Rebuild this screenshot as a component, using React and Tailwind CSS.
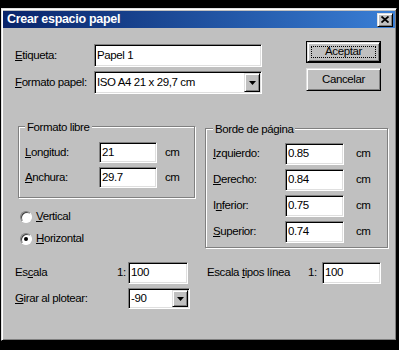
import React from "react";

const FONT = "font-['Liberation_Sans',Arial,sans-serif]";
const sunken =
  "bg-white border border-t-[#808080] border-l-[#808080] border-r-white border-b-white shadow-[inset_1px_1px_0_#000,inset_-1px_-1px_0_#dfdfdf]";
const raised =
  "bg-[#c0c0c0] border border-t-[#dfdfdf] border-l-[#dfdfdf] border-r-black border-b-black shadow-[inset_1px_1px_0_#fff,inset_-1px_-1px_0_#808080]";
const groupBox =
  "relative border border-[#808080] shadow-[inset_1px_1px_0_#fff,1px_1px_0_#fff]";

function Field({ value, w, h = 22 }) {
  return (
    <div
      className={`${sunken} flex items-center pl-[2px] shrink-0`}
      style={{ width: w, height: h }}
    >
      {value}
    </div>
  );
}

function Arrow() {
  return (
    <svg width="7" height="4" viewBox="0 0 7 4">
      <path d="M0 0H7L3.5 4Z" fill="#000" />
    </svg>
  );
}

function Select({ value, w, h = 23 }) {
  return (
    <div
      className={`${sunken} flex items-stretch p-[1px] shrink-0`}
      style={{ width: w, height: h }}
    >
      <div className="flex-1 flex items-center pl-[1px]">{value}</div>
      <div className={`${raised} w-[16px] flex items-center justify-center`}>
        <Arrow />
      </div>
    </div>
  );
}

function Radio({ checked, children }) {
  return (
    <div className="h-[22px] flex items-center ml-[17px]">
      <div className="w-[12px] h-[12px] rounded-full bg-white border border-t-[#808080] border-l-[#808080] border-r-white border-b-[#fff] shadow-[inset_1px_1px_0_#404040] flex items-center justify-center">
        {checked && <div className="w-[4px] h-[4px] rounded-full bg-black" />}
      </div>
      <span className="ml-[4px]">{children}</span>
    </div>
  );
}

export default function App() {
  return (
    <div className={`w-[399px] h-[350px] bg-black pt-[8px] pl-[1px] ${FONT} text-[11.5px] tracking-[-0.4px] leading-none text-black whitespace-nowrap`}>
      <div className="w-[396px] h-[333px] bg-[#c0c0c0] border border-t-[#dfdfdf] border-l-[#dfdfdf] border-r-black border-b-black shadow-[inset_1px_1px_0_#fff,inset_-1px_-1px_0_#808080] pt-[2px] px-[1px] flex flex-col">
        {/* Title bar */}
        <div className="h-[17px] bg-gradient-to-r from-[#0a246a] to-[#3a7fd6] flex items-center justify-between pl-[4px] pr-[2px]">
          <span className="text-white font-bold text-[12.5px] tracking-[-0.3px]">Crear espacio papel</span>
          <div className={`${raised} w-[16px] h-[14px] flex items-center justify-center`}>
            <svg width="8" height="7" viewBox="0 0 8 7">
              <path d="M0.5 0.5L7.5 6.5M7.5 0.5L0.5 6.5" stroke="#000" strokeWidth="1.8" />
            </svg>
          </div>
        </div>

        {/* Row A */}
        <div className="flex mt-[13px] pl-[12px]">
          <div className="flex flex-col gap-[4px] mt-[3px]">
            <div className="flex items-center">
              <span className="w-[79px]"><u>E</u>tiqueta:</span>
              <Field value="Papel 1" w={168} h={23} />
            </div>
            <div className="flex items-center">
              <span className="w-[79px]"><u>F</u>ormato papel:</span>
              <Select value="ISO A4 21 x 29,7 cm" w={168} h={23} />
            </div>
          </div>
          <div className="flex flex-col gap-[5px] ml-[44px]">
            <div className="w-[75px] h-[22px] border border-black">
              <div className={`${raised} w-full h-full flex items-center justify-center p-[3px]`}>
                <div className="w-full h-full border border-dotted border-black flex items-center justify-center">
                  Aceptar
                </div>
              </div>
            </div>
            <div className={`${raised} w-[75px] h-[23px] flex items-center justify-center`}>
              Cancelar
            </div>
          </div>
        </div>

        {/* Row B */}
        <div className="flex mt-[32px]">
          <div className="flex flex-col ml-[15px]">
            <div className={`${groupBox} w-[177px] h-[72px] pt-[15px] pb-[8px] pl-[6px] flex flex-col gap-[4px]`}>
              <span className="absolute left-[6px] -top-[7px] px-[2px] bg-[#c0c0c0] leading-[14px]">Formato libre</span>
              <div className="flex items-center">
                <span className="w-[74px]"><u>L</u>ongitud:</span>
                <Field value="21" w={58} h={21} />
                <span className="ml-[8px]">cm</span>
              </div>
              <div className="flex items-center">
                <span className="w-[74px]"><u>A</u>nchura:</span>
                <Field value="29.7" w={58} h={21} />
                <span className="ml-[8px]">cm</span>
              </div>
            </div>
            <div className="mt-[8px] -ml-[15px]">
              <Radio><u>V</u>ertical</Radio>
              <Radio checked><u>H</u>orizontal</Radio>
            </div>
          </div>
          <div className={`${groupBox} ml-[10px] mt-[2px] w-[183px] h-[120px] pt-[14px] pl-[7px] flex flex-col gap-[4px]`}>
            <span className="absolute left-[7px] -top-[7px] px-[2px] bg-[#c0c0c0] leading-[14px]">Borde de página</span>
            {[
              [<><u>I</u>zquierdo:</>, "0.85"],
              [<><u>D</u>erecho:</>, "0.84"],
              [<>I<u>n</u>ferior:</>, "0.75"],
              [<><u>S</u>uperior:</>, "0.74"],
            ].map(([label, v], i) => (
              <div key={i} className="flex items-center">
                <span className="w-[72px]">{label}</span>
                <Field value={v} w={59} h={22} />
                <span className="ml-[12px]">cm</span>
              </div>
            ))}
          </div>
        </div>

        {/* Row C */}
        <div className="flex mt-[12px] pl-[12px]">
          <div className="w-[192px] flex flex-col gap-[4px]">
            <div className="flex items-center">
              <span className="w-[102px]">Es<u>c</u>ala</span>
              <span className="w-[11px]">1:</span>
              <Field value="100" w={60} h={22} />
            </div>
            <div className="flex items-center">
              <span className="w-[113px]"><u>G</u>irar al plotear:</span>
              <Select value="-90" w={62} h={21} />
            </div>
          </div>
          <div className="flex items-start">
            <div className="flex items-center">
              <span className="w-[101px]">Escala <u>t</u>ipos línea</span>
              <span className="w-[14px]">1:</span>
              <Field value="100" w={59} h={22} />
            </div>
          </div>
        </div>
      </div>
    </div>
  );
}
